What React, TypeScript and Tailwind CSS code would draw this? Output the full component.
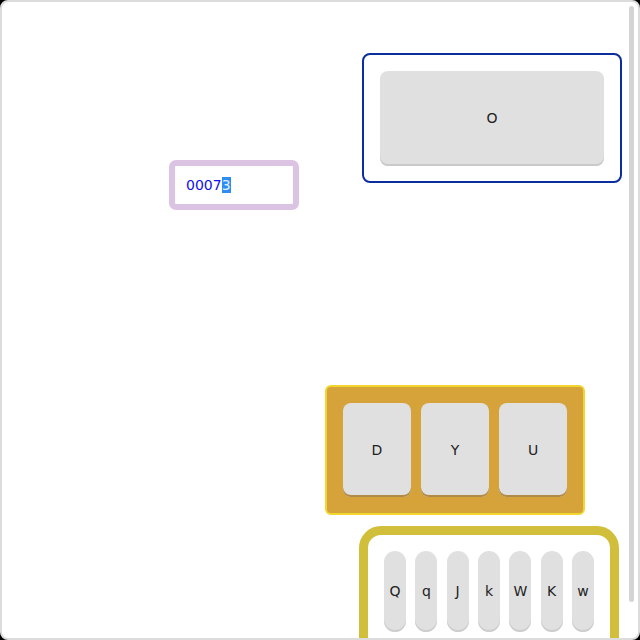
import React from 'react';

const font = { fontFamily: '"DejaVu Sans", "Noto Sans", sans-serif' };

const keysRow = ['Q', 'q', 'J', 'k', 'W', 'K', 'w'];

const App: React.FC = () => {
  return (
    <div className="h-[640px] w-[640px] bg-black" style={font}>
      <div className="relative h-full w-full overflow-hidden rounded-[8px] border-2 border-[#dcdcdc] bg-white text-[14px] text-[#222]">
        {/* text field */}
        <div className="absolute left-[167px] top-[158px] flex h-[50px] w-[130px] items-center rounded-[7px] border-[6px] border-[#dbc3e4] bg-white pl-[11px]">
          <span className="text-[#1010ee]">
            0007<span className="bg-[#2f8cf0] text-[#dff0ff]">3</span>
          </span>
        </div>

        {/* single button panel */}
        <div className="absolute left-[360px] top-[51px] h-[130px] w-[260px] rounded-[8px] border-2 border-[#0b2e9f] p-4">
          <button className="flex h-[95px] w-full items-center justify-center rounded-[8px] bg-[#e0e0e0] shadow-[inset_0_-2px_0_#c9c9c9]">
            O
          </button>
        </div>

        {/* three keys */}
        <div className="absolute left-[323px] top-[383px] flex h-[130px] w-[260px] gap-[10px] rounded-[6px] border-2 border-[#f2d62e] bg-[#d6a23a] p-4">
          {['D', 'Y', 'U'].map(k => (
            <button
              key={k}
              className="flex h-[94px] w-[68px] items-center justify-center rounded-[8px] bg-[#e0e0e0] shadow-[inset_0_-2px_0_#b08a46]"
            >
              {k}
            </button>
          ))}
        </div>

        {/* row of pills */}
        <div className="absolute left-[357px] top-[524px] flex h-[140px] w-[260px] justify-between rounded-[22px] border-[9px] border-[#d1bf3c] bg-white px-4 pt-4">
          {keysRow.map((k, i) => (
            <button
              key={i}
              className="flex h-[81px] w-[22px] items-center justify-center rounded-full bg-[#e0e0e0] shadow-[inset_0_-2px_0_#cdcdcd]"
            >
              {k}
            </button>
          ))}
        </div>

        {/* scrollbar */}
        <div className="absolute right-[4px] top-[4px] h-[596px] w-[5px] rounded-full bg-[#d4d4d4]" />
      </div>
    </div>
  );
};

export default App;
